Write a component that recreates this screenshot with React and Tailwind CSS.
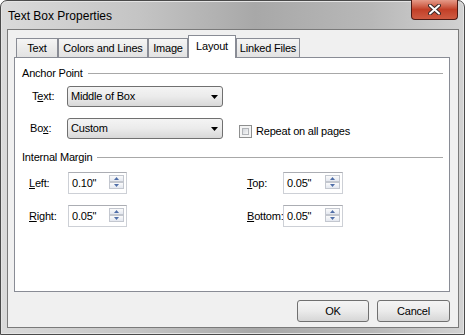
import React from "react";

const tabs = [
	{ label: "Text", w: "w-[42px]" },
	{ label: "Colors and Lines", w: "w-[90px]" },
	{ label: "Image", w: "w-[40px]" },
	{ label: "Layout", w: "w-[48px]", selected: true },
	{ label: "Linked Files", w: "w-[64px]" },
];

const GroupHeader = ({ title, className }) => (
	<div className={`flex items-center gap-[5px] ml-[7px] mr-[6px] h-[14px] ${className}`}>
		<span>{title}</span>
		<div className="flex-1 h-px bg-[#a8a8a8]" />
	</div>
);

const Dropdown = ({ value }) => (
	<div className="w-[156px] h-[21px] flex items-center justify-between border border-[#707070] rounded-[3px] bg-linear-to-b from-[#f4f4f4] via-[#ebebeb] to-[#d8d8d8] pl-[3px] pr-[4px]">
		<span>{value}</span>
		<svg width="7" height="4" viewBox="0 0 7 4">
			<polygon points="0,0 7,0 3.5,4" fill="#000" />
		</svg>
	</div>
);

const SpinArrow = ({ up }) => (
	<div className="h-[7px] w-[15px] flex items-center justify-center border border-[#c3c7cf] bg-linear-to-b from-[#fbfbfb] to-[#e4e8f0]">
		<svg width="5" height="3" viewBox="0 0 5 3">
			<polygon points={up ? "0,3 5,3 2.5,0" : "0,0 5,0 2.5,3"} fill="#4f6ea8" />
		</svg>
	</div>
);

const SpinBox = ({ value, w }) => (
	<div className={`${w} h-[22px] flex border border-[#cdd0d6] border-t-[#abadb3] bg-white`}>
		<span className="flex-1 pl-[3px] leading-[20px]">{value}</span>
		<div className="flex flex-col mt-[2px] mr-[2px]">
			<SpinArrow up />
			<SpinArrow />
		</div>
	</div>
);

const Button = ({ label, w }) => (
	<div className={`${w} h-[22px] flex items-center justify-center border border-[#707070] rounded-[3px] bg-linear-to-b from-[#f4f4f4] via-[#ebebeb] to-[#d6d6d6]`}>
		{label}
	</div>
);

export default function App() {
	return (
		<div className="w-[465px] h-[335px] flex flex-col rounded-t-[7px] border border-[#4a4a4a] bg-[linear-gradient(90deg,#dadada_0%,#c4c4c4_30%,#a8a8a8_55%,#b8b8b8_80%,#d2d2d2_100%)] shadow-[inset_0_0_0_1px_#e4e4e4] text-[11px] tracking-[-0.2px] text-black font-['Liberation_Sans',sans-serif]">
			<div className="h-[28px] flex items-start justify-between">
				<span className="pl-[7px] pt-[6px] text-[12px] tracking-normal">Text Box Properties</span>
				<div className="w-[47px] h-[20px] -mt-px mr-[6px] flex items-center justify-center rounded-b-[4px] border border-t-0 border-[#4e1a14] bg-linear-to-b from-[#e59a88] via-[#c23f27] to-[#cf5b42]">
					<svg width="13" height="11" viewBox="0 0 13 11">
						<path d="M2 1.5 L11 9.5 M11 1.5 L2 9.5" stroke="#3b2a28" strokeWidth="4" strokeLinecap="round" />
						<path d="M2 1.5 L11 9.5 M11 1.5 L2 9.5" stroke="#ffffff" strokeWidth="2" strokeLinecap="round" />
					</svg>
				</div>
			</div>

			<div className="ml-[6px] w-[452px] h-[299px] flex flex-col border border-[#7a7a7a] bg-[#f0f0f0]">
				<div className="flex items-end h-[22px] mt-[5px] pl-[8px]">
					{tabs.map((t) =>
						t.selected ? (
							<div
								key={t.label}
								className={`${t.w} h-[23px] -mb-px relative z-10 bg-white border border-b-0 border-[#898c95] text-center leading-[20px]`}
							>
								{t.label}
							</div>
						) : (
							<div
								key={t.label}
								className={`${t.w} h-[19px] border border-b-0 border-[#898c95] bg-linear-to-b from-[#f5f5f5] to-[#e2e2e2] text-center leading-[18px]`}
							>
								{t.label}
							</div>
						)
					)}
				</div>

				<div className="ml-[6px] w-[436px] h-[235px] flex flex-col border border-[#898c95] bg-white">
					<GroupHeader title="Anchor Point" className="mt-[8px]" />

					<div className="mt-[6px] h-[21px] flex items-center pl-[15px]">
						<span className="w-[37px] pl-[2px]">
							T<u>e</u>xt:
						</span>
						<Dropdown value="Middle of Box" />
					</div>

					<div className="mt-[11px] h-[21px] flex items-start pl-[15px]">
						<span className="w-[37px] h-[21px] flex items-center">
							Bo<u>x</u>:
						</span>
						<Dropdown value="Custom" />
						<div className="ml-[16px] mt-[7px] h-[13px] flex items-center gap-[4px]">
							<div className="w-[13px] h-[13px] border border-[#8e8f8f] bg-[#f4f4f4] p-[2px]">
								<div className="w-full h-full border border-[#b1b4b8] bg-linear-to-br from-[#d3d6db] to-[#f7f7f7]" />
							</div>
							<span>Repeat on all pages</span>
						</div>
					</div>

					<GroupHeader title="Internal Margin" className="mt-[11px]" />

					<div className="mt-[8px] h-[22px] flex items-center pl-[14px]">
						<span className="w-[39px]">
							<u>L</u>eft:
						</span>
						<SpinBox value={'0.10"'} w="w-[59px]" />
						<span className="ml-[120px] w-[36px]">
							<u>T</u>op:
						</span>
						<SpinBox value={'0.05"'} w="w-[60px]" />
					</div>

					<div className="mt-[11px] h-[22px] flex items-center pl-[14px]">
						<span className="w-[39px]">
							<u>R</u>ight:
						</span>
						<SpinBox value={'0.05"'} w="w-[59px]" />
						<span className="ml-[120px] w-[36px]">
							<u>B</u>ottom:
						</span>
						<SpinBox value={'0.05"'} w="w-[60px]" />
					</div>
				</div>

				<div className="mt-[8px] flex justify-end gap-[8px] pr-[8px]">
					<Button label="OK" w="w-[72px]" />
					<Button label="Cancel" w="w-[73px]" />
				</div>
			</div>
		</div>
	);
}
